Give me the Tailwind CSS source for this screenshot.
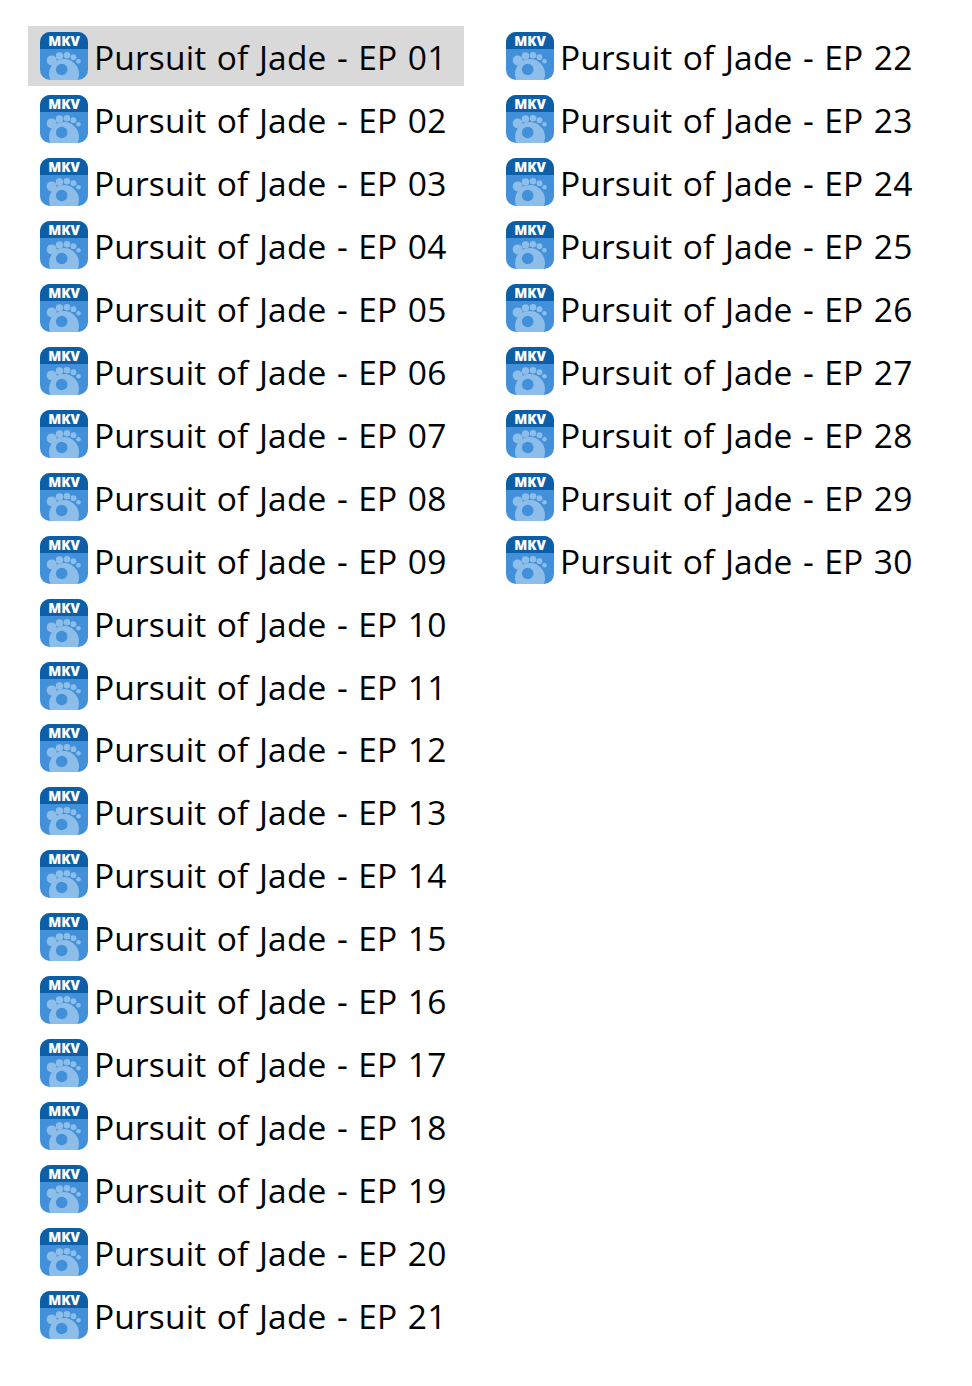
<!DOCTYPE html>
<html lang="en">
<head>
    <meta charset="UTF-8">
    <meta name="viewport" content="width=device-width, initial-scale=1.0">
    <title>Pursuit of Jade</title>
    <script src="https://cdn.jsdelivr.net/npm/@tailwindcss/browser@4"></script>
</head>
<body class="bg-white min-h-screen font-['Open_Sans','Noto_Sans',sans-serif] text-black">
    <svg class="hidden">
        <symbol id="mkv" viewBox="0 0 48 48">
            <rect width="48" height="48" fill="#4390da"></rect>
            <rect width="48" height="17" fill="#0c5fa6"></rect>
            <circle cx="24" cy="42" r="15" fill="#8dbde9"></circle>
            <circle cx="21.7" cy="37.5" r="5.8" fill="#4390da"></circle>
            <circle cx="11.7" cy="28.4" r="5" fill="#8dbde9"></circle>
            <circle cx="19.5" cy="24" r="3.7" fill="#8dbde9"></circle>
            <circle cx="27" cy="23.3" r="3.3" fill="#8dbde9"></circle>
            <circle cx="33.5" cy="25.2" r="2.9" fill="#8dbde9"></circle>
            <circle cx="38.5" cy="29.3" r="2.3" fill="#8dbde9"></circle>
            <text x="24" y="13.5" text-anchor="middle" font-family="Open Sans" font-weight="800" font-size="13.5" fill="#fff">MKV</text>
        </symbol>
    </svg>

    <div class="flex items-start pl-[28px] pt-[26px] gap-[30px]">
        <ul id="col1" class="w-[436px] flex flex-col gap-[3px]"></ul>
        <ul id="col2" class="w-[436px] flex flex-col gap-[3px]"></ul>
    </div>

    <script>
        // episodes 1-21 left, 22-30 right
        function row(ep) {
            const num = String(ep).padStart(2, '0');
            const selected = ep === 1 ? 'bg-[#d9d9d9]' : '';
            const nudge = ep === 12 ? '-mt-px' : '';
            return `
                <li class="h-[60px] flex items-center pl-[12px] gap-[6px] ${selected} ${nudge}">
                    <svg class="w-[48px] h-[48px] shrink-0 rounded-[10px]"><use href="#mkv"></use></svg>
                    <span class="text-[33.5px] leading-none pt-[4px] whitespace-nowrap tracking-[0.15px] [word-spacing:1.6px]">Pursuit of Jade - EP ${num}</span>
                </li>`;
        }

        const all = Array.from({ length: 30 }, (_, i) => i + 1);
        document.getElementById('col1').innerHTML = all.slice(0, 21).map(row).join('');
        document.getElementById('col2').innerHTML = all.slice(21).map(row).join('');
    </script>
</body>
</html>
